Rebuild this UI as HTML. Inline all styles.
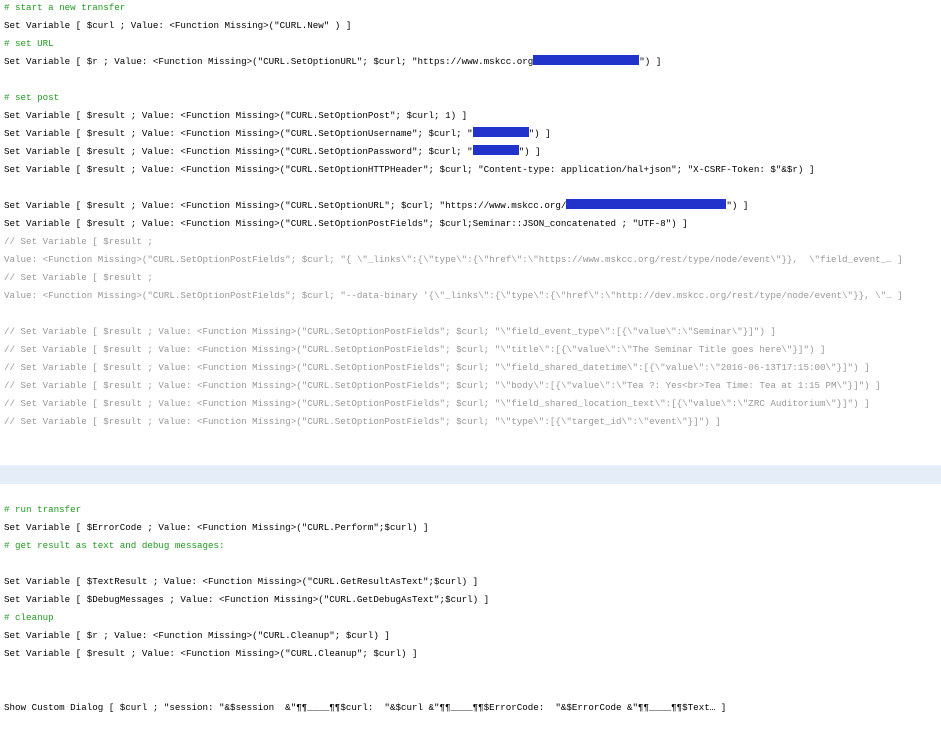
<!DOCTYPE html>
<html><head><meta charset="utf-8"><style>
html,body{margin:0;padding:0;background:#fff;width:941px;height:750px;overflow:hidden;position:relative}
.l{position:absolute;left:4px;height:18px;line-height:18px;font-family:"Liberation Mono",monospace;font-size:9.2px;color:#000;white-space:pre}
.g{color:#1f9a1f}
.c{color:#999}
.r{display:inline-block;background:#2233cc;height:10px;vertical-align:-1px}
.band{position:absolute;left:0;top:465px;width:941px;height:18px;background:#e4edf8;border-top:1px solid #eef3fb}
</style></head><body>
<div class="band"></div>
<div class="l g" style="top:-1px"># start a new transfer</div>
<div class="l" style="top:17px">Set Variable [ $curl ; Value: &lt;Function Missing&gt;("CURL.New" ) ]</div>
<div class="l g" style="top:35px"># set URL</div>
<div class="l" style="top:53px">Set Variable [ $r ; Value: &lt;Function Missing&gt;("CURL.SetOptionURL"; $curl; "https://www.mskcc.org<span class="r" style="width:106px"></span>") ]</div>
<div class="l g" style="top:89px"># set post</div>
<div class="l" style="top:107px">Set Variable [ $result ; Value: &lt;Function Missing&gt;("CURL.SetOptionPost"; $curl; 1) ]</div>
<div class="l" style="top:125px">Set Variable [ $result ; Value: &lt;Function Missing&gt;("CURL.SetOptionUsername"; $curl; "<span class="r" style="width:56px"></span>") ]</div>
<div class="l" style="top:143px">Set Variable [ $result ; Value: &lt;Function Missing&gt;("CURL.SetOptionPassword"; $curl; "<span class="r" style="width:46px"></span>") ]</div>
<div class="l" style="top:161px">Set Variable [ $result ; Value: &lt;Function Missing&gt;("CURL.SetOptionHTTPHeader"; $curl; "Content-type: application/hal+json"; "X-CSRF-Token: $"&amp;$r) ]</div>
<div class="l" style="top:197px">Set Variable [ $result ; Value: &lt;Function Missing&gt;("CURL.SetOptionURL"; $curl; "https://www.mskcc.org/<span class="r" style="width:160px"></span>") ]</div>
<div class="l" style="top:215px">Set Variable [ $result ; Value: &lt;Function Missing&gt;("CURL.SetOptionPostFields"; $curl;Seminar::JSON_concatenated ; "UTF-8") ]</div>
<div class="l c" style="top:233px">// Set Variable [ $result ;</div>
<div class="l c" style="top:251px">Value: &lt;Function Missing&gt;("CURL.SetOptionPostFields"; $curl; "{ \"_links\":{\"type\":{\"href\":\"https://www.mskcc.org/rest/type/node/event\"}},  \"field_event_… ]</div>
<div class="l c" style="top:269px">// Set Variable [ $result ;</div>
<div class="l c" style="top:287px">Value: &lt;Function Missing&gt;("CURL.SetOptionPostFields"; $curl; "--data-binary '{\"_links\":{\"type\":{\"href\":\"http://dev.mskcc.org/rest/type/node/event\"}}, \"… ]</div>
<div class="l c" style="top:323px">// Set Variable [ $result ; Value: &lt;Function Missing&gt;("CURL.SetOptionPostFields"; $curl; "\"field_event_type\":[{\"value\":\"Seminar\"}]") ]</div>
<div class="l c" style="top:341px">// Set Variable [ $result ; Value: &lt;Function Missing&gt;("CURL.SetOptionPostFields"; $curl; "\"title\":[{\"value\":\"The Seminar Title goes here\"}]") ]</div>
<div class="l c" style="top:359px">// Set Variable [ $result ; Value: &lt;Function Missing&gt;("CURL.SetOptionPostFields"; $curl; "\"field_shared_datetime\":[{\"value\":\"2016-06-13T17:15:00\"}]") ]</div>
<div class="l c" style="top:377px">// Set Variable [ $result ; Value: &lt;Function Missing&gt;("CURL.SetOptionPostFields"; $curl; "\"body\":[{\"value\":\"Tea ?: Yes&lt;br&gt;Tea Time: Tea at 1:15 PM\"}]") ]</div>
<div class="l c" style="top:395px">// Set Variable [ $result ; Value: &lt;Function Missing&gt;("CURL.SetOptionPostFields"; $curl; "\"field_shared_location_text\":[{\"value\":\"ZRC Auditorium\"}]") ]</div>
<div class="l c" style="top:413px">// Set Variable [ $result ; Value: &lt;Function Missing&gt;("CURL.SetOptionPostFields"; $curl; "\"type\":[{\"target_id\":\"event\"}]") ]</div>
<div class="l g" style="top:501px"># run transfer</div>
<div class="l" style="top:519px">Set Variable [ $ErrorCode ; Value: &lt;Function Missing&gt;("CURL.Perform";$curl) ]</div>
<div class="l g" style="top:537px"># get result as text and debug messages:</div>
<div class="l" style="top:573px">Set Variable [ $TextResult ; Value: &lt;Function Missing&gt;("CURL.GetResultAsText";$curl) ]</div>
<div class="l" style="top:591px">Set Variable [ $DebugMessages ; Value: &lt;Function Missing&gt;("CURL.GetDebugAsText";$curl) ]</div>
<div class="l g" style="top:609px"># cleanup</div>
<div class="l" style="top:627px">Set Variable [ $r ; Value: &lt;Function Missing&gt;("CURL.Cleanup"; $curl) ]</div>
<div class="l" style="top:645px">Set Variable [ $result ; Value: &lt;Function Missing&gt;("CURL.Cleanup"; $curl) ]</div>
<div class="l" style="top:699px">Show Custom Dialog [ $curl ; "session: "&amp;$session  &amp;"¶¶____¶¶$curl:  "&amp;$curl &amp;"¶¶____¶¶$ErrorCode:  "&amp;$ErrorCode &amp;"¶¶____¶¶$Text… ]</div>
</body></html>
